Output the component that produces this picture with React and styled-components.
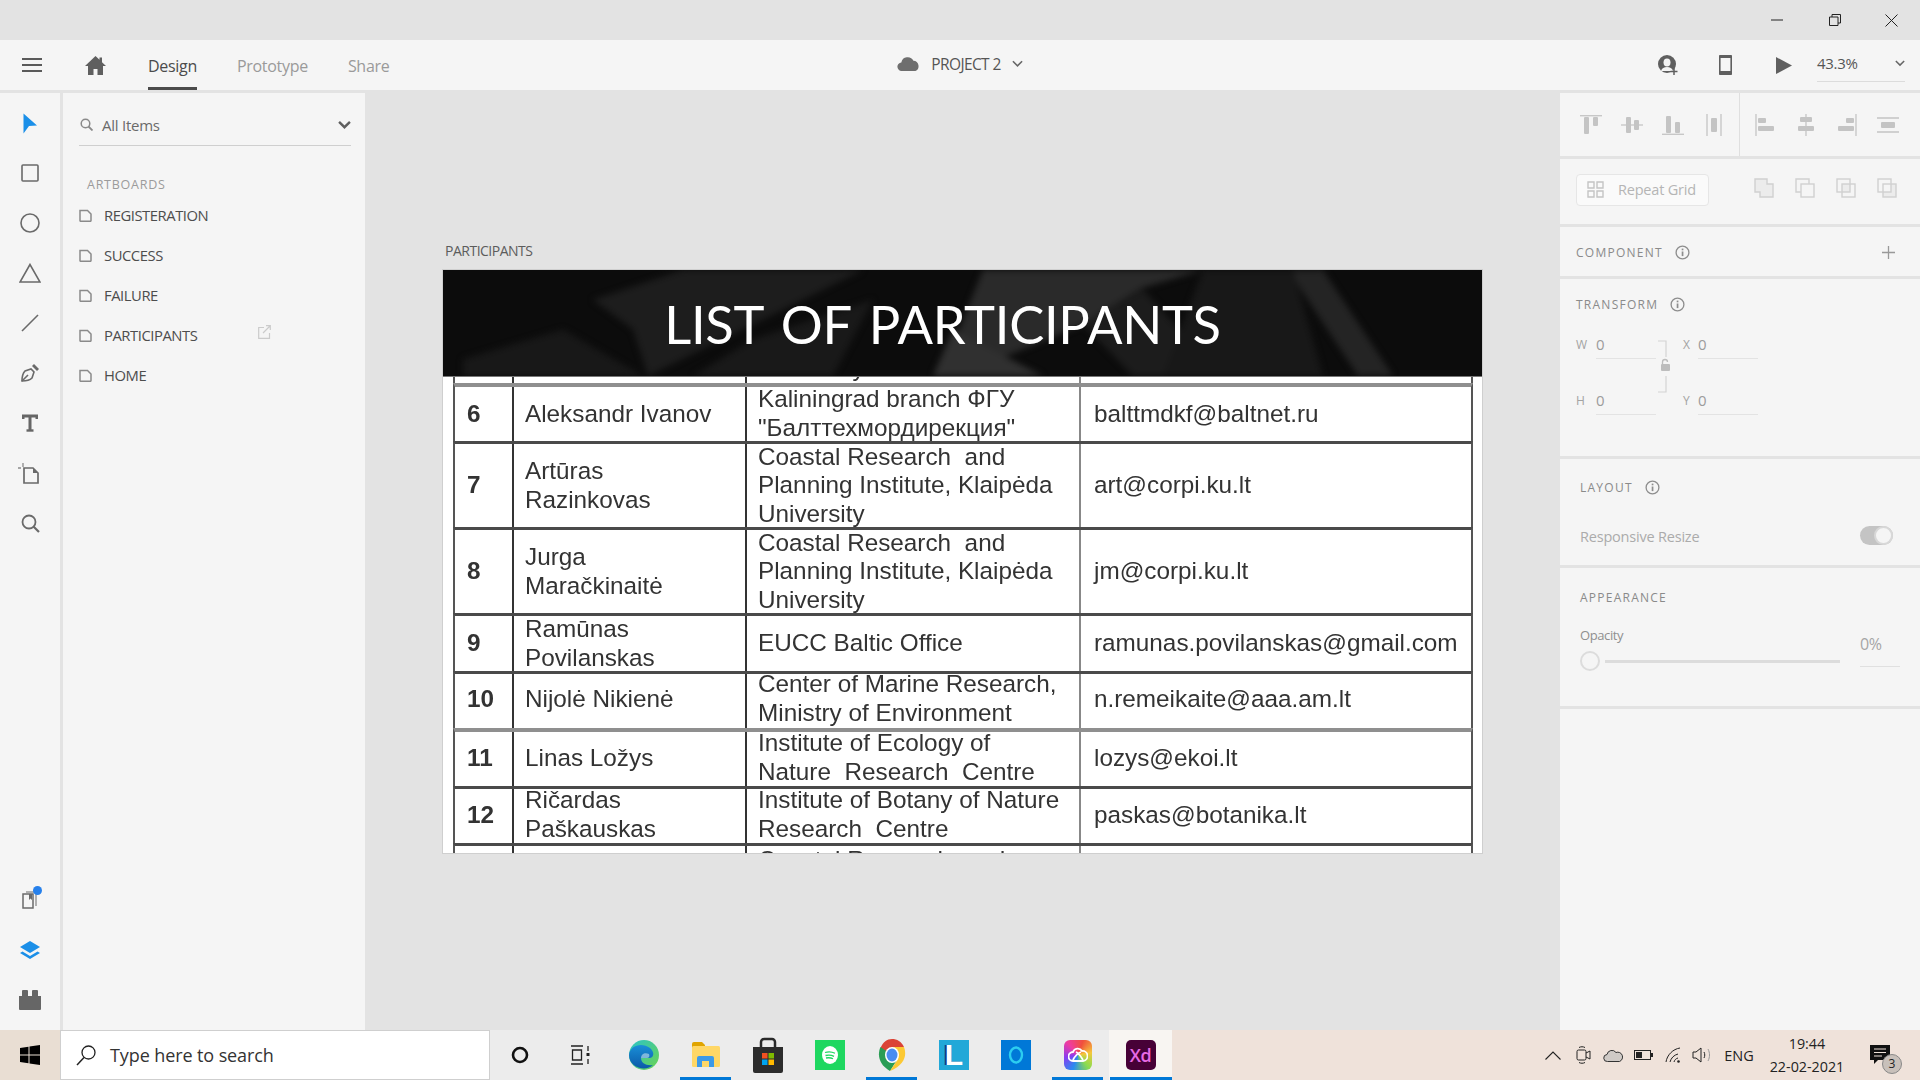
import React from "react";
import styled, { createGlobalStyle } from "styled-components";

const GlobalStyle = createGlobalStyle`
  html, body { margin: 0; padding: 0; background: #e3e3e3; }
  * { box-sizing: border-box; }
  body { font-family: "Open Sans", "Noto Sans", sans-serif; overflow: hidden; }
`;

const Shell = styled.div`
  width: 1920px;
  height: 1080px;
  display: grid;
  grid-template-rows: 40px 50px 1fr 50px;
  background: #e3e3e3;
  overflow: hidden;
`;

/* window title bar */
const TitleBar = styled.div`
  display: flex;
  justify-content: flex-end;
  background: #e3e3e3;
`;
const WinButton = styled.div`
  width: 57px;
  display: flex;
  align-items: center;
  justify-content: center;
`;

/* app header */
const AppBar = styled.header`
  display: grid;
  grid-template-columns: 1fr auto 1fr;
  background: #f5f5f5;
  align-items: stretch;
`;
const BarLeft = styled.div`
  display: flex;
  align-items: center;
  padding-left: 22px;
`;
const HomeLink = styled.div`
  display: flex;
  margin: 0 42px 0 43px;
`;
const Tab = styled.div`
  height: 100%;
  display: flex;
  align-items: center;
  padding-top: 1px;
  margin-right: 40px;
  font-size: 16px;
  letter-spacing: -0.3px;
  color: ${p => (p.$active ? "#4b4b4b" : "#9a9a9a")};
  border-bottom: 3px solid ${p => (p.$active ? "#4b4b4b" : "transparent")};
  border-top: 3px solid transparent;
`;
const ProjectName = styled.div`
  display: flex;
  align-items: center;
  font-size: 15.5px;
  letter-spacing: -0.6px;
  color: #555;
  gap: 11px;
  padding-bottom: 3px;
`;
const BarRight = styled.div`
  display: flex;
  align-items: center;
  justify-content: flex-end;
  padding-right: 15px;
`;
const BarIcon = styled.div`
  display: flex;
  margin-right: ${p => p.$gap}px;
`;
const ZoomBox = styled.div`
  width: 88px;
  height: 30px;
  margin-top: 3px;
  border-bottom: 1px solid #dcdcdc;
  display: flex;
  align-items: center;
  justify-content: space-between;
  font-size: 15px;
  letter-spacing: -0.3px;
  color: #555;
  padding-bottom: 6px;
`;

/* main work area */
const Main = styled.div`
  display: flex;
  margin-top: 3px;
  min-height: 0;
`;
const Rail = styled.nav`
  width: 60px;
  margin-right: 3px;
  background: #f5f5f5;
  display: flex;
  flex-direction: column;
  padding: 5px 0;
`;
const RailSlot = styled.div`
  height: 50px;
  flex: none;
  display: flex;
  align-items: center;
  justify-content: center;
  position: relative;
  margin-top: ${p => (p.$push ? "auto" : "0")};
`;
const Dot = styled.span`
  position: absolute;
  top: 11px;
  left: 33px;
  width: 9px;
  height: 9px;
  border-radius: 50%;
  background: #2680eb;
`;
const LeftPanel = styled.aside`
  width: 302px;
  background: #f5f5f5;
  padding: 0 14px 0 16px;
`;
const SearchRow = styled.div`
  height: 53px;
  border-bottom: 1px solid #cfcfcf;
  display: flex;
  align-items: center;
  font-size: 15px;
  letter-spacing: -0.25px;
  color: #6a6a6a;
  padding: 11px 0 0 1px;
`;
const SearchLabel = styled.span`
  margin-left: 9px;
  flex: 1;
`;
const GroupTitle = styled.div`
  font-size: 12.5px;
  letter-spacing: 0.75px;
  color: #9b9b9b;
  padding: 30px 0 0 8px;
  height: 59px;
`;
const BoardRow = styled.div`
  height: 40px;
  display: flex;
  align-items: center;
  gap: 12px;
  font-size: 14.8px;
  letter-spacing: -0.45px;
  color: #4d4d4d;
  position: relative;
  top: -10px;
`;
const ShareMark = styled.span`
  display: flex;
  margin: -7px 0 0 49px;
`;

/* canvas */
const Canvas = styled.main`
  flex: 1;
  min-width: 0;
  padding: 148px 0 0 78px;
`;
const BoardLabel = styled.div`
  height: 29px;
  padding-left: 2px;
  font-size: 14px;
  letter-spacing: -0.5px;
  color: #5c5c5c;
`;
const Artboard = styled.div`
  width: 1039px;
  height: 583px;
  background: #fff;
  box-shadow: 0 0 0 1px #cfcfcf;
  overflow: hidden;
`;
const Banner = styled.div`
  height: 107px;
  background: #0c0c0c;
  position: relative;
  overflow: hidden;
  display: flex;
  align-items: center;
  justify-content: center;
  padding: 1px 40px 0 0;
  border-bottom: 1px solid #777;
`;
const BannerArt = styled.svg`
  position: absolute;
  inset: 0;
  width: 100%;
  height: 100%;
  filter: blur(3px);
`;
const BannerTitle = styled.h1`
  position: relative;
  margin: 0;
  font-family: "Lato", sans-serif;
  font-weight: 400;
  font-size: 52.5px;
  line-height: 1.2;
  letter-spacing: -0.3px;
  word-spacing: 5px;
  color: #fff;
`;
const ScanTable = styled.div`
  padding: 0 9px 0 10px;
  filter: blur(0.6px);
  font-family: "Liberation Sans", Arial, sans-serif;
  font-size: 24.3px;
  line-height: 28.6px;
  color: #333;
`;
const ScanRow = styled.div`
  height: ${p => p.$h}px;
  display: grid;
  grid-template-columns: 57px 233px 334px 1fr;
  grid-template-rows: minmax(0, 1fr);
  border-top: ${p => p.$line || "0 solid #000"};
  border-left: 2px solid #555;
  border-right: 2px solid #555;
  overflow: ${p => (p.$clip ? "hidden" : "visible")};
`;
const ScanCell = styled.div`
  display: flex;
  min-height: 0;
  align-items: ${p => p.$align || "center"};
  padding-left: ${p => p.$pad || 11}px;
  padding-bottom: ${p => p.$lift || 0}px;
  border-left: ${p => p.$rule || "0"};
  font-weight: ${p => (p.$bold ? 700 : 400)};
  white-space: pre;
`;

/* right panel */
const RightPanel = styled.aside`
  width: 360px;
  display: flex;
  flex-direction: column;
  gap: 3px;
`;
const Section = styled.section`
  background: #f5f5f5;
  height: ${p => p.$h}px;
  flex: ${p => (p.$fill ? 1 : "none")};
  padding: ${p => p.$pad || "0"};
  position: relative;
`;
const AlignBar = styled.div`
  height: 100%;
  display: flex;
`;
const AlignGroup = styled.div`
  display: flex;
  align-items: center;
  padding-left: ${p => p.$left}px;
  width: ${p => p.$w}px;
  border-right: ${p => (p.$rule ? "1px solid #dfdfdf" : "0")};
`;
const AlignSlot = styled.div`
  width: 41px;
  display: flex;
  justify-content: center;
`;
const ToolRow = styled.div`
  height: 100%;
  display: flex;
  align-items: center;
  padding: 0 0 4px 16px;
`;
const RepeatButton = styled.div`
  width: 133px;
  height: 32px;
  background: #fafafa;
  border: 1.5px solid #e6e6e6;
  border-radius: 4px;
  display: flex;
  align-items: center;
  padding-left: 10px;
  gap: 14px;
  font-size: 14.5px;
  letter-spacing: -0.2px;
  color: #b5b5b5;
  margin-right: 34px;
`;
const BoolSlot = styled.div`
  width: 41px;
  display: flex;
  justify-content: center;
  margin-top: -3px;
`;
const SectionHead = styled.div`
  display: flex;
  align-items: center;
  height: ${p => p.$h || 49}px;
  font-size: 12px;
  letter-spacing: 1.25px;
  color: #8a8a8a;
  gap: ${p => p.$gap || 12}px;
`;
const PlusMark = styled.span`
  margin-left: auto;
  display: flex;
  padding-right: 25px;
`;
const FieldGrid = styled.div`
  display: grid;
  grid-template-columns: 107px 1fr;
  grid-auto-rows: 56px;
  position: relative;
  margin-top: -3px;
`;
const Field = styled.div`
  display: flex;
  padding-top: 4px;
`;
const FieldLabel = styled.span`
  width: ${p => p.$w}px;
  font-size: 12px;
  color: #a3a3a3;
  padding-top: 6px;
`;
const FieldValue = styled.span`
  width: 60px;
  height: 29px;
  border-bottom: 1px solid #e3e3e3;
  font-size: 15px;
  line-height: 20px;
  color: #9c9c9c;
  padding-top: 4px;
`;
const LinkMark = styled.span`
  position: absolute;
  left: 80px;
  top: 14px;
  display: flex;
`;
const ResizeRow = styled.div`
  display: flex;
  align-items: center;
  justify-content: space-between;
  font-size: 14.5px;
  letter-spacing: -0.2px;
  color: #ababab;
  padding: 12px 27px 0 0;
`;
const Toggle = styled.div`
  width: 33px;
  height: 19px;
  border-radius: 10px;
  background: #c4c4c4;
  display: flex;
  justify-content: flex-end;
  margin-top: -3px;
`;
const ToggleKnob = styled.span`
  width: 19px;
  height: 19px;
  border-radius: 50%;
  background: #f5f5f5;
  border: 2px solid #d8d8d8;
`;
const SliderRow = styled.div`
  display: grid;
  grid-template-columns: 280px 40px;
  align-items: start;
`;
const SliderLabel = styled.div`
  font-size: 13px;
  letter-spacing: -0.4px;
  color: #8f8f8f;
  height: 25px;
`;
const SliderLine = styled.div`
  display: flex;
  align-items: center;
  gap: 5px;
`;
const SliderKnob = styled.span`
  width: 20px;
  height: 20px;
  border-radius: 50%;
  background: #f5f5f5;
  border: 2px solid #dcdcdc;
`;
const SliderTrack = styled.span`
  width: 235px;
  height: 3px;
  background: #dcdcdc;
`;
const Percent = styled.div`
  height: 37px;
  margin-top: 4px;
  border-bottom: 1px solid #e0e0e0;
  font-size: 16px;
  letter-spacing: -0.3px;
  color: #a5a5a5;
  padding-top: 3px;
`;

/* windows taskbar */
const Taskbar = styled.footer`
  display: flex;
  background: linear-gradient(90deg, #ececec 0, #ececec 1171px, #efe2da 1172px);
  position: relative;
`;
const StartButton = styled.div`
  width: 60px;
  background: #e9ded3;
  display: flex;
  align-items: center;
  justify-content: center;
`;
const SearchBox = styled.div`
  width: 430px;
  margin-right: -1px;
  background: #fff;
  border: 1px solid #cfcfcf;
  display: flex;
  align-items: center;
  gap: 13px;
  padding-left: 14px;
  font-size: 18px;
  letter-spacing: -0.1px;
  color: #333;
`;
const TaskSlot = styled.div`
  width: ${p => (p.$current ? 63 : 62)}px;
  display: flex;
  align-items: center;
  justify-content: center;
  position: relative;
  background: ${p => (p.$current ? "#f8f5f2" : "transparent")};
  &::after {
    content: "";
    position: absolute;
    bottom: 0;
    left: ${p => (p.$current ? 1 : 5)}px;
    right: ${p => (p.$current ? 0 : 6)}px;
    height: 3px;
    background: ${p => (p.$open ? "#0078d7" : "transparent")};
  }
`;
const SpotifyTile = styled.div`
  width: 30px;
  height: 30px;
  background: #1ed760;
  display: flex;
  align-items: center;
  justify-content: center;
`;
const LetterTile = styled.div`
  width: 30px;
  height: 30px;
  background: #22a8d8;
  color: #fff;
  font-family: "Liberation Sans", sans-serif;
  font-weight: 700;
  font-size: 30px;
  line-height: 30px;
  text-align: center;
  text-shadow: -2px 0 0 #123a8a;
`;
const AlexaTile = styled.div`
  width: 30px;
  height: 30px;
  background: #0078d7;
  display: flex;
  align-items: center;
  justify-content: center;
`;
const CloudTile = styled.div`
  width: 28px;
  height: 30px;
  border-radius: 6px;
  background: conic-gradient(from 200deg, #2a8cf0, #8a3cf0, #f03ca0, #f0503c, #f5c83c, #8adc50, #2a8cf0);
  display: flex;
  align-items: center;
  justify-content: center;
`;
const XdTile = styled.div`
  width: 30px;
  height: 30px;
  border-radius: 5px;
  background: #470137;
  color: #e86ae4;
  font-family: "Open Sans", sans-serif;
  font-weight: 600;
  font-size: 18px;
  letter-spacing: -0.5px;
  line-height: 30px;
  text-align: center;
`;
const Tray = styled.div`
  margin-left: auto;
  display: flex;
  align-items: center;
  color: #222;
`;
const TraySlot = styled.div`
  width: ${p => p.$w}px;
  display: flex;
  justify-content: center;
`;
const TrayLang = styled.div`
  width: 46px;
  text-align: center;
  font-size: 14.5px;
`;
const Clock = styled.div`
  width: 90px;
  text-align: center;
  font-size: 14.3px;
  line-height: 23px;
`;
const Notify = styled.div`
  width: 68px;
  position: relative;
  display: flex;
  justify-content: center;
  padding-right: 12px;
`;
const NotifyBadge = styled.span`
  position: absolute;
  left: 30px;
  top: 9px;
  width: 20px;
  height: 20px;
  border-radius: 50%;
  border: 1px solid #888;
  background: #c8c0ba;
  font-size: 12px;
  line-height: 18px;
  text-align: center;
`;

const S = { fill: "none", stroke: "#6a6a6a", strokeWidth: 1.6 };
const Gl = { fill: "#c4c4c4" };
const Ln = { stroke: "#c4c4c4", strokeWidth: 1.3 };

const Chevron = ({ size = 12, color = "#666", w = 2 }) => (
  <svg width={size} height={size} viewBox="0 0 12 12">
    <path d="M1 3.500 6 8.500 11 3.500" fill="none" stroke={color} strokeWidth={w} />
  </svg>
);

const Info = () => (
  <svg width="15" height="15" viewBox="0 0 15 15">
    <circle cx="7.500" cy="7.500" r="6.400" fill="none" stroke="#8d8d8d" strokeWidth="1.300" />
    <rect x="6.700" y="6.500" width="1.700" height="4.600" fill="#8d8d8d" />
    <rect x="6.700" y="3.600" width="1.700" height="1.700" fill="#8d8d8d" />
  </svg>
);

const PageGlyph = () => (
  <svg width="13" height="13" viewBox="0 0 13 13">
    <path d="M1 1.500h7.500l3.500 3.500v6.500a.8.8 0 0 1-.8.8H1.800a.8.800 0 0 1-.8-.8z" fill="none" stroke="#8a8a8a" strokeWidth="1.500" />
  </svg>
);

const railIcons = [
  <svg width="16" height="21" viewBox="0 0 16 21"><path d="M1.500 0.500 15 12.500 7 13 1.500 20.500z" fill="#1b8fe8" /></svg>,
  <svg width="18" height="18" viewBox="0 0 18 18"><rect x="1" y="1" width="16" height="16" rx="1" {...S} /></svg>,
  <svg width="20" height="20" viewBox="0 0 20 20"><circle cx="10" cy="10" r="9" {...S} /></svg>,
  <svg width="22" height="20" viewBox="0 0 22 20"><path d="M11 1.500 1 19h20z" {...S} /></svg>,
  <svg width="18" height="18" viewBox="0 0 18 18"><path d="M17 1 1 17" {...S} /></svg>,
  <svg width="20" height="20" viewBox="0 0 20 20"><path d="M2 18c0-5 1-8 3-10l6-2 3 3-2 6c-2 2-5 3-10 3z" {...S} /><path d="M2 18l6-6" {...S} /><path d="m12 3 2-2 5 5-2 2z" fill="#6a6a6a" /></svg>,
  <svg width="16" height="18" viewBox="0 0 16 18"><path d="M1 5V2h14v3M8 2v14" fill="none" stroke="#666" strokeWidth="3" /><path d="M4.500 16.500h7" stroke="#666" strokeWidth="2.400" /></svg>,
  <svg width="21" height="21" viewBox="0 0 21 21" style={{ marginRight: 3 }}><path d="M6 5h9l5 5v10H6z" fill="none" stroke="#6a6a6a" strokeWidth="1.700" /><path d="M15 5l5 5h-5z" fill="#6a6a6a" /><path d="M5 0v4M0 5h3" stroke="#8a8a8a" strokeWidth="1.300" /></svg>,
  <svg width="19" height="19" viewBox="0 0 19 19"><circle cx="8" cy="8" r="6.500" {...S} strokeWidth="1.800" /><path d="m12.500 12.500 5.500 5.500" {...S} strokeWidth="2.200" /></svg>,
];

const alignIcons = [
  <svg width="22" height="20" viewBox="0 0 22 20"><path d="M0 .7h22" {...Ln} /><rect x="4" y="2" width="5" height="17" rx="1" {...Gl} /><rect x="13" y="2" width="5" height="9" rx="1" {...Gl} /></svg>,
  <svg width="22" height="20" viewBox="0 0 22 20"><path d="M0 10h22" {...Ln} /><rect x="5" y="2" width="5" height="16" rx="1" {...Gl} /><rect x="13" y="5" width="5" height="10" rx="1" {...Gl} /></svg>,
  <svg width="22" height="20" viewBox="0 0 22 20"><path d="M0 19.300h22" {...Ln} /><rect x="4" y="1" width="5" height="17" rx="1" {...Gl} /><rect x="13" y="7" width="5" height="11" rx="1" {...Gl} /></svg>,
  <svg width="16" height="22" viewBox="0 0 16 22"><path d="M1 0v22M15 0v22" {...Ln} /><rect x="5" y="4" width="6" height="14" rx="1" {...Gl} /></svg>,
  <svg width="20" height="22" viewBox="0 0 20 22"><path d="M1 0v22" {...Ln} /><rect x="3" y="4" width="8" height="5" rx="1" {...Gl} /><rect x="3" y="12" width="16" height="5" rx="1" {...Gl} /></svg>,
  <svg width="18" height="22" viewBox="0 0 18 22"><path d="M9 0v22" {...Ln} /><rect x="3" y="3" width="12" height="5" rx="1" {...Gl} /><rect x="1" y="12" width="16" height="5" rx="1" {...Gl} /></svg>,
  <svg width="20" height="22" viewBox="0 0 20 22"><path d="M19 0v22" {...Ln} /><rect x="9" y="4" width="8" height="5" rx="1" {...Gl} /><rect x="1" y="12" width="16" height="5" rx="1" {...Gl} /></svg>,
  <svg width="22" height="16" viewBox="0 0 22 16"><path d="M0 1h22M0 15h22" {...Ln} /><rect x="4" y="5" width="14" height="6" rx="1" {...Gl} /></svg>,
];

const B = { fill: "none", stroke: "#d0d0d0", strokeWidth: 1.4 };
const boolIcons = [
  <svg width="20" height="20" viewBox="0 0 20 20"><path d="M1 1h12v5h6v13H6v-5H1z" fill="#ececec" stroke="#d0d0d0" strokeWidth="1.400" /></svg>,
  <svg width="20" height="20" viewBox="0 0 20 20"><path d="M6 14H1V1h13v5" {...B} /><rect x="6" y="6" width="13" height="13" {...B} /></svg>,
  <svg width="20" height="20" viewBox="0 0 20 20"><rect x="6" y="6" width="8" height="8" fill="#ececec" /><rect x="1" y="1" width="13" height="13" {...B} /><rect x="6" y="6" width="13" height="13" {...B} /></svg>,
  <svg width="20" height="20" viewBox="0 0 20 20"><path d="M14 6h5v13H6v-5h8z" fill="#ececec" /><rect x="1" y="1" width="13" height="13" {...B} /><rect x="6" y="6" width="13" height="13" {...B} /></svg>,
];

const boards = ["REGISTERATION", "SUCCESS", "FAILURE", "PARTICIPANTS", "HOME"];

const DARK = "3px solid #4a4a4a";
const GREY = "4px solid #8f8f8f";
const rows = [
  { h: 58, line: GREY, no: "6", name: ["Aleksandr Ivanov"], org: ["Kaliningrad branch ФГУ", "\"Балттехмордирекция\""], mail: "balttmdkf@baltnet.ru" },
  { h: 86, line: DARK, no: "7", name: ["Artūras", "Razinkovas"], org: ["Coastal Research  and", "Planning Institute, Klaipėda", "University"], mail: "art@corpi.ku.lt" },
  { h: 86, line: DARK, no: "8", name: ["Jurga", "Maračkinaitė"], org: ["Coastal Research  and", "Planning Institute, Klaipėda", "University"], mail: "jm@corpi.ku.lt" },
  { h: 58, line: DARK, no: "9", name: ["Ramūnas", "Povilanskas"], org: ["EUCC Baltic Office"], mail: "ramunas.povilanskas@gmail.com" },
  { h: 57, line: DARK, no: "10", lift: 4, name: ["Nijolė Nikienė"], org: ["Center of Marine Research,", "Ministry of Environment"], mail: "n.remeikaite@aaa.am.lt" },
  { h: 58, line: GREY, no: "11", lift: 2, name: ["Linas Ložys"], org: ["Institute of Ecology of", "Nature  Research  Centre"], mail: "lozys@ekoi.lt" },
  { h: 57, line: DARK, no: "12", lift: 2, name: ["Ričardas", "Paškauskas"], org: ["Institute of Botany of Nature", "Research  Centre"], mail: "paskas@botanika.lt" },
];

const RULE_A = "2px solid #333";
const RULE_B = "2px solid #888";

const Lines = ({ items }) => <div>{items.map(t => <div key={t}>{t}</div>)}</div>;

const TableRow = ({ h, line, no, name, org, mail, align, lift, clip }) => (
  <ScanRow $h={h} $line={line} $clip={clip}>
    <ScanCell $bold $pad={12} $align={align} $lift={lift}>{no}</ScanCell>
    <ScanCell $rule={RULE_A} $align={align} $lift={lift}><Lines items={name} /></ScanCell>
    <ScanCell $rule={RULE_A} $align={align} $lift={lift}><Lines items={org} /></ScanCell>
    <ScanCell $rule={RULE_B} $pad={13} $align={align} $lift={lift}>{mail}</ScanCell>
  </ScanRow>
);

const taskDefs = [
  { key: "cortana", el: <svg width="18" height="18" viewBox="0 0 18 18"><circle cx="9" cy="9" r="7" fill="none" stroke="#111" strokeWidth="2.600" /></svg> },
  { key: "view", el: <svg width="20" height="20" viewBox="0 0 20 20" style={{ marginRight: 4 }}><path d="M1 1h12M1 19h12M2.500 5h9v10h-9zM18 1v5M18 14v5" fill="none" stroke="#222" strokeWidth="1.300" /><rect x="16.500" y="8" width="3" height="3" fill="#222" /></svg> },
  {
    key: "edge",
    el: (
      <svg width="32" height="32" viewBox="0 0 32 32">
        <defs>
          <linearGradient id="edgeA" x1="0" y1="0" x2="1" y2="1"><stop offset="0" stopColor="#2bc3c9" /><stop offset="1" stopColor="#6bd44f" /></linearGradient>
          <linearGradient id="edgeB" x1="0" y1="0" x2="0" y2="1"><stop offset="0" stopColor="#1a8fd8" /><stop offset="1" stopColor="#0b5aa8" /></linearGradient>
        </defs>
        <circle cx="16" cy="16" r="15" fill="url(#edgeA)" />
        <path d="M1 16C2 6 14 3 22 9c5 4 4 10-1 10h-8c0 5 5 8 12 7-7 7-24 3-24-10z" fill="url(#edgeB)" />
        <path d="M13 19c0-4 4-6 8-4 1 2 0 4-2 4z" fill="#eaf6f4" opacity=".5" />
      </svg>
    ),
  },
  {
    key: "files",
    open: true,
    el: (
      <svg width="28" height="26" viewBox="0 0 28 26">
        <path d="M0 2a2 2 0 0 1 2-2h8l3 3v3H0z" fill="#e0a400" />
        <rect y="4" width="28" height="21" rx="1.500" fill="#ffd766" />
        <path d="M5 25v-9a2 2 0 0 1 2-2h13a2 2 0 0 1 2 2v9h-5v-6h-7v6z" fill="#3d9ae8" />
      </svg>
    ),
  },
  {
    key: "store",
    el: (
      <svg width="30" height="36" viewBox="0 0 30 36">
        <path d="M8 10V5a3 3 0 0 1 3-3h8a3 3 0 0 1 3 3v5" fill="none" stroke="#2a2a2a" strokeWidth="2.500" />
        <path d="M0 10h30v24a2 2 0 0 1-2 2H2a2 2 0 0 1-2-2z" fill="#2c2c2c" />
        <rect x="9" y="16" width="5.500" height="5.500" fill="#f25022" /><rect x="15.500" y="16" width="5.500" height="5.500" fill="#7fba00" />
        <rect x="9" y="22.500" width="5.500" height="5.500" fill="#00a4ef" /><rect x="15.500" y="22.500" width="5.500" height="5.500" fill="#ffb900" />
      </svg>
    ),
  },
  {
    key: "spotify",
    el: (
      <SpotifyTile>
        <svg width="16" height="18" viewBox="0 0 16 18">
          <ellipse cx="8" cy="9" rx="8" ry="9" fill="#fff" />
          <path d="M3 6.500c3-1 7-.8 10 .8M3.500 9.500c3-.8 6-.5 8.500.8M4 12c2.500-.5 5-.3 7 .8" fill="none" stroke="#1ed760" strokeWidth="1.300" />
        </svg>
      </SpotifyTile>
    ),
  },
  {
    key: "chrome",
    open: true,
    el: (
      <svg width="28" height="34" viewBox="0 0 28 34">
        <path d="M14 17 2.500 10C5 4 9 1 14 1c5 0 9.500 2.500 12 8H14z" fill="#db4437" />
        <path d="M14 17 2.500 9C-1 17 1 27 12 33l7-11z" fill="#2a9d55" />
        <path d="M14 9h12c3 8 1 18-14 24l8-12z" fill="#fcc934" />
        <ellipse cx="14" cy="17" rx="7" ry="8" fill="#fff" />
        <ellipse cx="14" cy="17" rx="5.500" ry="6.500" fill="#4a8cf0" />
      </svg>
    ),
  },
  { key: "lingo", el: <LetterTile>L</LetterTile> },
  {
    key: "alexa",
    el: (
      <AlexaTile>
        <svg width="16" height="18" viewBox="0 0 16 18"><ellipse cx="8" cy="9" rx="6" ry="7.500" fill="none" stroke="#2ccdf0" strokeWidth="2.400" /></svg>
      </AlexaTile>
    ),
  },
  {
    key: "cloud",
    open: true,
    el: (
      <CloudTile>
        <svg width="20" height="16" viewBox="0 0 20 16"><path d="M5 14a4 4 0 0 1 0-9 5 5 0 0 1 9-1 5 5 0 0 1 1 10zM8 5c3 1 5 5 7 8M13 5c-3 1-6 4-8 8" fill="none" stroke="#fff" strokeWidth="1.800" /></svg>
      </CloudTile>
    ),
  },
  { key: "xd", open: true, current: true, el: <XdTile>Xd</XdTile> },
];

const App = () => (
  <Shell>
    <GlobalStyle />
    <TitleBar>
      <WinButton>
        <svg width="12" height="2" viewBox="0 0 12 2" style={{ marginRight: 2 }}><path d="M0 1h12" stroke="#222" strokeWidth="1" /></svg>
      </WinButton>
      <WinButton>
        <svg width="12" height="12" viewBox="0 0 12 12"><path d="M.5 3h8.500v8.500H.5zM3 3V.5h8.500V9H9" fill="none" stroke="#222" /></svg>
      </WinButton>
      <WinButton>
        <svg width="13" height="13" viewBox="0 0 13 13"><path d="M.5.5l12 12M12.500.5l-12 12" stroke="#222" /></svg>
      </WinButton>
    </TitleBar>

    <AppBar>
      <BarLeft>
        <svg width="20" height="16" viewBox="0 0 20 16"><path d="M0 2h20M0 8h20M0 14h20" stroke="#5a5a5a" strokeWidth="2.200" /></svg>
        <HomeLink>
          <svg width="21" height="19" viewBox="0 0 21 19"><path d="M10.500 0 0 10h3v9h5.500v-6h4v6H18v-9h3l-4-3.800V1.500h-2.500v2.300z" fill="#5f5f5f" /></svg>
        </HomeLink>
        <Tab $active>Design</Tab>
        <Tab>Prototype</Tab>
        <Tab>Share</Tab>
      </BarLeft>
      <ProjectName>
        <svg width="23" height="15" viewBox="0 0 21 14"><path d="M4.500 14a4 4 0 0 1-.7-8 6 6 0 0 1 11.300-1.500A5 5 0 0 1 17 14z" fill="#6e6e6e" /></svg>
        <span>PROJECT 2</span>
        <Chevron size={11} color="#666" w={1.700} />
      </ProjectName>
      <BarRight>
        <BarIcon $gap={41}>
          <svg width="20" height="20" viewBox="0 0 20 20"><circle cx="9" cy="9" r="9" fill="#5f5f5f" /><ellipse cx="9" cy="7.500" rx="3.500" ry="4" fill="#f5f5f5" /><path d="M3 16c1-3 3-4 6-4s5 1 6 4" fill="#f5f5f5" /><path d="M16 13v7M12.500 16.500h7" stroke="#5f5f5f" strokeWidth="1.500" /></svg>
        </BarIcon>
        <BarIcon $gap={44}>
          <svg width="13" height="20" viewBox="0 0 13 20"><rect x=".8" y=".8" width="11.400" height="18.400" rx="1.500" fill="none" stroke="#5f5f5f" strokeWidth="1.600" /><rect y="0" width="13" height="3" rx="1" fill="#5f5f5f" /><rect y="16" width="13" height="4" rx="1" fill="#5f5f5f" /></svg>
        </BarIcon>
        <BarIcon $gap={25}>
          <svg width="16" height="17" viewBox="0 0 16 17"><path d="M0 0 16 8.500 0 17z" fill="#5f5f5f" /></svg>
        </BarIcon>
        <ZoomBox>
          <span>43.3%</span>
          <Chevron size={10} color="#666" w={1.800} />
        </ZoomBox>
      </BarRight>
    </AppBar>

    <Main>
      <Rail>
        {railIcons.map((icon, i) => <RailSlot key={i}>{icon}</RailSlot>)}
        <RailSlot $push>
          <svg width="16" height="18" viewBox="0 0 16 18"><path d="M1 3h10v14H1z" fill="none" stroke="#6a6a6a" strokeWidth="1.500" /><path d="M4 1h10v14" fill="none" stroke="#6a6a6a" strokeWidth="1" /><path d="M7 3h3v6L8.500 7.500 7 9z" fill="#6a6a6a" /></svg>
          <Dot />
        </RailSlot>
        <RailSlot>
          <svg width="20" height="18" viewBox="0 0 20 18"><path d="M10 0l10 6-10 6L0 6z" fill="#1b8fe8" /><path d="M2.500 10.500 0 12l10 6 10-6-2.500-1.500L10 15z" fill="#1b8fe8" /></svg>
        </RailSlot>
        <RailSlot>
          <svg width="22" height="20" viewBox="0 0 22 20"><path d="M0 6h3V1a1 1 0 0 1 1-1h4a1 1 0 0 1 1 1v5h4V1a1 1 0 0 1 1-1h4a1 1 0 0 1 1 1v5h3v13a1 1 0 0 1-1 1H1a1 1 0 0 1-1-1z" fill="#666" /></svg>
        </RailSlot>
      </Rail>

      <LeftPanel>
        <SearchRow>
          <svg width="13" height="13" viewBox="0 0 13 13"><circle cx="5.500" cy="5.500" r="4.300" fill="none" stroke="#8a8a8a" strokeWidth="1.500" /><path d="m8.500 8.500 4 4" stroke="#8a8a8a" strokeWidth="1.800" /></svg>
          <SearchLabel>All Items</SearchLabel>
          <Chevron size={13} color="#5f5f5f" w={2.200} />
        </SearchRow>
        <GroupTitle>ARTBOARDS</GroupTitle>
        {boards.map(name => (
          <BoardRow key={name}>
            <PageGlyph />
            <span>{name}</span>
            {name === "PARTICIPANTS" && (
              <ShareMark>
                <svg width="13" height="14" viewBox="0 0 13 14"><path d="M6 2.500H.7v10.800h10.800V8M5 8l7-7M8 .7h4.300V5" fill="none" stroke="#cbcbcb" strokeWidth="1.200" /></svg>
              </ShareMark>
            )}
          </BoardRow>
        ))}
      </LeftPanel>

      <Canvas>
        <BoardLabel>PARTICIPANTS</BoardLabel>
        <Artboard>
          <Banner>
            <BannerArt viewBox="0 0 1039 107" preserveAspectRatio="none">
              <polygon points="150,30 240,0 420,0 330,45 205,107 190,60" fill="#1d1d1d" />
              <polygon points="310,70 430,30 390,107 250,107" fill="#191919" />
              <polygon points="540,0 760,0 700,18 640,55 515,107 500,107 520,50" fill="#2a2a2a" />
              <polygon points="640,55 700,20 780,107 690,107" fill="#1c1c1c" />
              <polygon points="510,60 600,107 490,107" fill="#303030" />
              <polygon points="845,0 880,0 950,107 915,107" fill="#242424" />
              <polygon points="760,0 850,0 880,107 720,107" fill="#181818" />
              <polygon points="20,90 120,60 200,107 20,107" fill="#181818" />
            </BannerArt>
            <BannerTitle>LIST OF PARTICIPANTS</BannerTitle>
          </Banner>
          <ScanTable>
            <TableRow h={6} clip align="flex-end" no="" name={[""]} org={["University"]} mail="" />
            {rows.map(r => <TableRow key={r.no} {...r} />)}
            <TableRow h={10} clip line={DARK} align="flex-start" no="" name={[""]} org={["Coastal Research  and"]} mail="" />
          </ScanTable>
        </Artboard>
      </Canvas>

      <RightPanel>
        <Section $h={63}>
          <AlignBar>
            <AlignGroup $left={10} $w={180} $rule>
              {alignIcons.slice(0, 4).map((icon, i) => <AlignSlot key={i}>{icon}</AlignSlot>)}
            </AlignGroup>
            <AlignGroup $left={4} $w={180}>
              {alignIcons.slice(4).map((icon, i) => <AlignSlot key={i}>{icon}</AlignSlot>)}
            </AlignGroup>
          </AlignBar>
        </Section>
        <Section $h={65}>
          <ToolRow>
            <RepeatButton>
              <svg width="17" height="17" viewBox="0 0 17 17"><path d="M1 1h6v6H1zM10 1h6v6h-6zM1 10h6v6H1zM10 10h6v6h-6z" fill="none" stroke="#c4c4c4" strokeWidth="1.400" /></svg>
              Repeat Grid
            </RepeatButton>
            {boolIcons.map((icon, i) => <BoolSlot key={i}>{icon}</BoolSlot>)}
          </ToolRow>
        </Section>
        <Section $h={49} $pad="0 0 0 16px">
          <SectionHead $h={50}>
            COMPONENT
            <Info />
            <PlusMark>
              <svg width="13" height="13" viewBox="0 0 13 13"><path d="M6.500 0v13M0 6.500h13" stroke="#999" strokeWidth="1.300" /></svg>
            </PlusMark>
          </SectionHead>
        </Section>
        <Section $h={177} $pad="0 0 0 16px">
          <SectionHead $h={50}>
            TRANSFORM
            <Info />
          </SectionHead>
          <FieldGrid>
            <Field><FieldLabel $w={20}>W</FieldLabel><FieldValue>0</FieldValue></Field>
            <Field><FieldLabel $w={15}>X</FieldLabel><FieldValue>0</FieldValue></Field>
            <Field><FieldLabel $w={20}>H</FieldLabel><FieldValue>0</FieldValue></Field>
            <Field><FieldLabel $w={15}>Y</FieldLabel><FieldValue>0</FieldValue></Field>
            <LinkMark>
              <svg width="16" height="56" viewBox="0 0 16 56"><path d="M2 1h8v16M2 52h8V36" fill="none" stroke="#d4d4d4" strokeWidth="1.200" /><rect x="5" y="24" width="9" height="7" rx="1" fill="#bdbdbd" /><path d="M6.500 24v-2a2.500 2.500 0 0 1 5 0" fill="none" stroke="#bdbdbd" strokeWidth="1.300" /></svg>
            </LinkMark>
          </FieldGrid>
        </Section>
        <Section $h={106} $pad="0 0 0 20px">
          <SectionHead $h={56}>
            LAYOUT
            <Info />
          </SectionHead>
          <ResizeRow>
            Responsive Resize
            <Toggle><ToggleKnob /></Toggle>
          </ResizeRow>
        </Section>
        <Section $h={138} $pad="0 0 0 20px">
          <SectionHead $h={58}>APPEARANCE</SectionHead>
          <SliderRow>
            <div>
              <SliderLabel>Opacity</SliderLabel>
              <SliderLine><SliderKnob /><SliderTrack /></SliderLine>
            </div>
            <Percent>0%</Percent>
          </SliderRow>
        </Section>
        <Section $fill />
      </RightPanel>
    </Main>

    <Taskbar>
      <StartButton>
        <svg width="20" height="20" viewBox="0 0 20 20"><path d="M0 3l8.500-1.200V9.500H0zM9.500 1.600 20 0v9.500H9.500zM0 10.500h8.500v7.700L0 17zM9.500 10.500H20V20l-10.500-1.600z" fill="#000" /></svg>
      </StartButton>
      <SearchBox>
        <svg width="22" height="22" viewBox="0 0 22 22"><circle cx="13.500" cy="8.500" r="6.500" fill="none" stroke="#222" strokeWidth="1.300" /><path d="M9 13.500 2 21" stroke="#222" strokeWidth="1.500" /></svg>
        <span>Type here to search</span>
      </SearchBox>
      {taskDefs.map(t => (
        <TaskSlot key={t.key} $open={t.open} $current={t.current}>{t.el}</TaskSlot>
      ))}
      <Tray>
        <TraySlot $w={30}>
          <svg width="16" height="9" viewBox="0 0 16 9"><path d="M.5 8.500 8 1l7.500 7.500" fill="none" stroke="#222" strokeWidth="1.100" /></svg>
        </TraySlot>
        <TraySlot $w={30}>
          <svg width="15" height="20" viewBox="0 0 15 20"><rect x="1" y="5" width="9" height="10" rx="1.500" fill="none" stroke="#222" /><path d="M10 8l4-2v8l-4-2M3 2.500c2-1 4-1 6 0M3 17.500c2 1 4 1 6 0" fill="none" stroke="#222" /></svg>
        </TraySlot>
        <TraySlot $w={30}>
          <svg width="20" height="13" viewBox="0 0 20 13"><path d="M4.500 12.500a3.500 3.500 0 0 1-.5-7 5 5 0 0 1 9-2 4 4 0 0 1 3.500 9z" fill="#cfcac6" stroke="#333" /></svg>
        </TraySlot>
        <TraySlot $w={30}>
          <svg width="19" height="10" viewBox="0 0 19 10"><rect x=".5" y=".5" width="16" height="9" fill="none" stroke="#222" /><rect x="2" y="2" width="6" height="6" fill="#222" /><rect x="17" y="3" width="2" height="4" fill="#222" /></svg>
        </TraySlot>
        <TraySlot $w={30}>
          <svg width="17" height="16" viewBox="0 0 17 16"><path d="M1 15C2 8 8 2 15 1M5 15c1-4 4-7 8-8M9 15c.5-2 2-3.500 4-4" fill="none" stroke="#222" /><circle cx="13.500" cy="14.500" r="1.300" fill="#222" /></svg>
        </TraySlot>
        <TraySlot $w={28}>
          <svg width="20" height="16" viewBox="0 0 20 16"><path d="M1 5h3l5-4v14l-5-4H1z" fill="none" stroke="#222" /><path d="M12 5c1 2 1 4 0 6" fill="none" stroke="#222" /><path d="M16 2c2 4 2 8 0 12" fill="none" stroke="#999" /></svg>
        </TraySlot>
        <TrayLang>ENG</TrayLang>
        <Clock>
          <div>19:44</div>
          <div>22-02-2021</div>
        </Clock>
        <Notify>
          <svg width="20" height="20" viewBox="0 0 20 20"><path d="M0 0h20v15H8l-4 4v-4H0z" fill="#111" /><path d="M4 4h12M4 7.500h12M4 11h8" stroke="#efe2da" strokeWidth="1" /></svg>
          <NotifyBadge>3</NotifyBadge>
        </Notify>
      </Tray>
    </Taskbar>
  </Shell>
);

export default App;
